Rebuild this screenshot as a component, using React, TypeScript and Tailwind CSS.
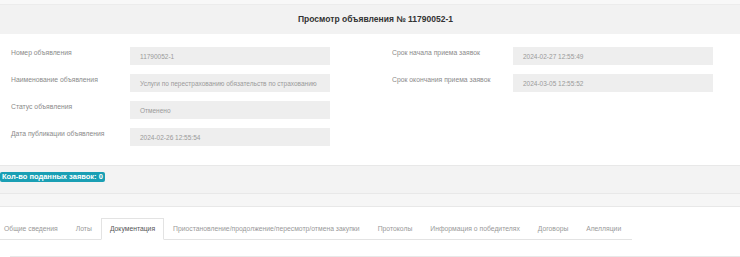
import React from "react";

const leftRows = [
  { label: "Номер объявления", value: "11790052-1" },
  { label: "Наименование объявления", value: "Услуги по перестрахованию обязательств по страхованию" },
  { label: "Статус объявления", value: "Отменено" },
  { label: "Дата публикации объявления", value: "2024-02-26 12:55:54" },
];

const rightRows = [
  { label: "Срок начала приема заявок", value: "2024-02-27 12:55:49" },
  { label: "Срок окончания приема заявок", value: "2024-03-05 12:55:52" },
];

const tabs = [
  "Общие сведения",
  "Лоты",
  "Документация",
  "Приостановление/продолжение/пересмотр/отмена закупки",
  "Протоколы",
  "Информация о победителях",
  "Договоры",
  "Апелляции",
];

function Field({ label, value, labelW }: { label: string; value: string; labelW: string }) {
  return (
    <div className="flex h-[27px] items-start">
      <div className={`${labelW} whitespace-nowrap pt-[1px] text-[6.8px] leading-[9px] text-[#8a8a8a]`}>{label}</div>
      <div className="flex h-[18px] w-[200px] items-center overflow-hidden whitespace-nowrap bg-[#eeeeee] px-[10px] pt-[2px] text-[6.5px] text-[#9a9a9a]">
        {value}
      </div>
    </div>
  );
}

export default function App() {
  return (
    <div className="h-[257px] w-[740px] overflow-hidden bg-white font-['Liberation_Sans',Arial,sans-serif]">
      <div className="h-[5px] border-b border-[#ececec] bg-[#f8f8f8]" />
      <div className="flex h-[29px] items-center justify-center bg-[#f2f2f2] pl-[11px] text-[8.5px] font-bold text-[#333]">
        Просмотр объявления № 11790052-1
      </div>

      <div className="flex pt-[13px] pl-[11px]">
        <div className="flex flex-col">
          {leftRows.map((r) => (
            <Field key={r.label} label={r.label} value={r.value} labelW="w-[119px]" />
          ))}
        </div>
        <div className="ml-[62px] flex flex-col">
          {rightRows.map((r) => (
            <Field key={r.label} label={r.label} value={r.value} labelW="w-[121px]" />
          ))}
        </div>
      </div>

      <div className="mt-[10px] flex h-[28px] items-start border-t border-[#e8e8e8] bg-[#f3f3f3] pt-[6px]">
        <span className="whitespace-nowrap rounded-[2px] bg-[#1a9fb4] px-[2px] text-[7.5px] font-bold leading-[10px] text-white">
          Кол-во поданных заявок: 0
        </span>
      </div>
      <div className="h-[14px] border-t border-b border-[#e8e8e8] bg-[#f6f6f6]" />

      <div className="mt-[11px] flex w-[632px] border-b border-[#e3e3e3] pl-[3px]">
        {tabs.map((t, i) => (
          <div
            key={t}
            className={
              t === "Документация"
                ? "-mb-px whitespace-nowrap border border-[#e3e3e3] border-b-white bg-white px-[8px] pt-[6px] pb-[5px] text-[6.8px] leading-[8px] text-[#555]"
                : `whitespace-nowrap border border-transparent pt-[6px] pb-[5px] text-[6.8px] leading-[8px] text-[#999] ${i === 0 ? "pl-0 pr-[8px]" : "px-[8px]"}`
            }
          >
            {t}
          </div>
        ))}
      </div>
      <div className="ml-[10px] mt-[16px] border-t border-[#e8e8e8]" />
    </div>
  );
}
